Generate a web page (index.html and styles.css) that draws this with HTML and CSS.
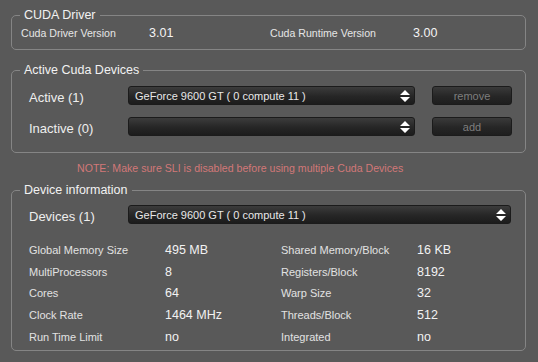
FILE: index.html
```html
<!DOCTYPE html>
<html lang="en">
<head>
    <meta charset="UTF-8">
    <title>CUDA Devices</title>
    <link rel="stylesheet" href="styles.css">
</head>
<body>
    <fieldset class="group driver">
        <legend>CUDA Driver</legend>
        <div class="version-row">
            <span class="v-label">Cuda Driver Version</span>
            <span class="v-value">3.01</span>
            <span class="v-label">Cuda Runtime Version</span>
            <span class="v-value">3.00</span>
        </div>
    </fieldset>

    <fieldset class="group devices">
        <legend>Active Cuda Devices</legend>
        <div class="device-row">
            <span class="row-label">Active (1)</span>
            <div class="combo short">
                <span>GeForce 9600 GT ( 0 compute 11 )</span>
                <svg class="arrows" width="10" height="12" viewBox="0 0 10 12"><path d="M5 0 L10 5 L0 5 Z M0 7 L10 7 L5 12 Z" fill="#fff"/></svg>
            </div>
            <button class="btn">remove</button>
        </div>
        <div class="device-row">
            <span class="row-label">Inactive (0)</span>
            <div class="combo short">
                <span></span>
                <svg class="arrows" width="10" height="12" viewBox="0 0 10 12"><path d="M5 0 L10 5 L0 5 Z M0 7 L10 7 L5 12 Z" fill="#fff"/></svg>
            </div>
            <button class="btn">add</button>
        </div>
    </fieldset>

    <p class="note">NOTE: Make sure SLI is disabled before using multiple Cuda Devices</p>

    <fieldset class="group info">
        <legend>Device information</legend>
        <div class="device-row">
            <span class="row-label">Devices (1)</span>
            <div class="combo wide">
                <span>GeForce 9600 GT ( 0 compute 11 )</span>
                <svg class="arrows" width="10" height="12" viewBox="0 0 10 12"><path d="M5 0 L10 5 L0 5 Z M0 7 L10 7 L5 12 Z" fill="#fff"/></svg>
            </div>
        </div>
        <div class="info-grid">
            <span class="k">Global Memory Size</span><span class="v">495 MB</span>
            <span class="k">Shared Memory/Block</span><span class="v">16 KB</span>
            <span class="k">MultiProcessors</span><span class="v">8</span>
            <span class="k">Registers/Block</span><span class="v">8192</span>
            <span class="k">Cores</span><span class="v">64</span>
            <span class="k">Warp Size</span><span class="v">32</span>
            <span class="k">Clock Rate</span><span class="v">1464 MHz</span>
            <span class="k">Threads/Block</span><span class="v">512</span>
            <span class="k">Run Time Limit</span><span class="v">no</span>
            <span class="k">Integrated</span><span class="v">no</span>
        </div>
    </fieldset>
</body>
</html>
```

FILE: styles.css
```css
body {
    margin: 0;
    padding: 7px 12px 0 11px;
    background-color: #595959;
    font-family: "Liberation Sans", Arial, sans-serif;
    color: #ececec;
}
.group {
    margin: 0;
    padding: 0 8px 6px 8px;
    border: 1px solid #858585;
    border-radius: 5px;
    min-width: 0;
}
.group legend {
    padding: 0 4px;
    font-size: 12.5px;
    line-height: 16px;
    color: #f2f2f2;
}
.devices,
.info {
    margin-top: 12px;
}
.version-row {
    display: grid;
    grid-template-columns: 128px 121px 143px auto;
    align-items: center;
    height: 20px;
    padding-left: 1px;
}
.v-label {
    font-size: 10.6px;
    color: #e6e6e6;
}
.v-value {
    font-size: 12.5px;
    color: #f4f4f4;
}
.devices {
    padding-top: 8px;
    padding-bottom: 16px;
}
.device-row {
    display: flex;
    align-items: center;
    height: 19px;
    padding-left: 9px;
}
.device-row + .device-row {
    margin-top: 12px;
}
.row-label {
    width: 99px;
    font-size: 13px;
    color: #eeeeee;
    padding-top: 4px;
}
.combo {
    display: flex;
    align-items: center;
    justify-content: space-between;
    box-sizing: border-box;
    height: 19px;
    padding: 0 4px 0 6px;
    background: linear-gradient(#3c3c3c, #262626 55%, #1c1c1c);
    border: 1px solid #1b1b1b;
    border-radius: 3px;
    font-size: 11px;
    color: #e8e8e8;
}
.combo.short {
    width: 287px;
}
.combo.wide {
    width: 383px;
}
.btn {
    box-sizing: border-box;
    width: 80px;
    height: 19px;
    margin-left: 17px;
    padding: 0;
    background: linear-gradient(#3a3a3a, #262626 55%, #1e1e1e);
    border: 1px solid #1b1b1b;
    border-radius: 3px;
    font-family: inherit;
    font-size: 11px;
    color: #7e7e7e;
}
.note {
    margin: 7px 0 6px 0;
    padding-left: 66px;
    line-height: 16px;
    font-size: 10.6px;
    color: #d27878;
}
.info {
    margin-top: 0;
    padding-top: 7px;
    padding-bottom: 2px;
}
.info-grid {
    display: grid;
    grid-template-columns: 136px 116px 136px auto;
    grid-auto-rows: 21.75px;
    align-items: center;
    margin-top: 15px;
    padding-left: 9px;
}
.info-grid .k {
    font-size: 11px;
    color: #e2e2e2;
}
.info-grid .v {
    font-size: 12.5px;
    color: #f2f2f2;
}
```
